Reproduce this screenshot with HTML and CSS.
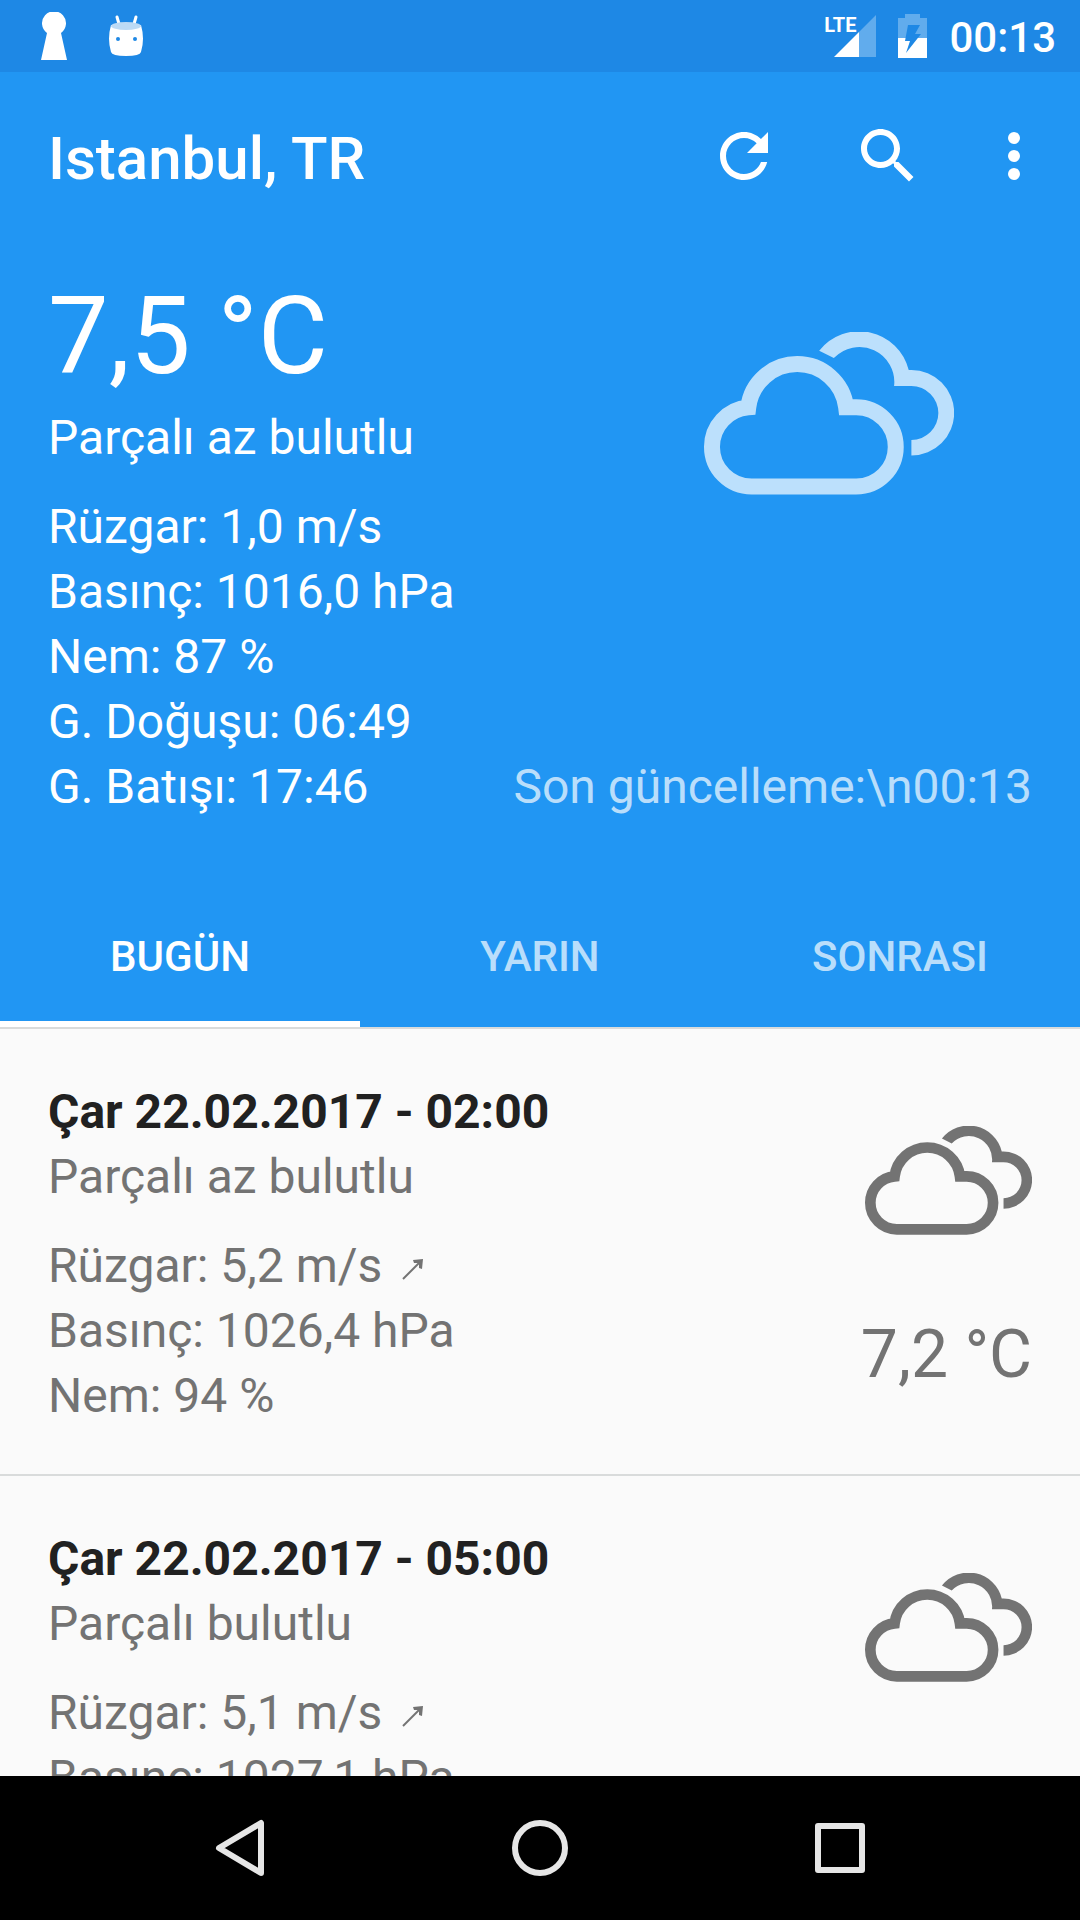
FILE: index.html
```html
<!DOCTYPE html>
<html lang="tr">
<head>
<meta charset="utf-8">
<meta name="viewport" content="width=device-width, initial-scale=1">
<title>Istanbul, TR</title>
<link rel="stylesheet" href="styles.css">
</head>
<body>
<svg class="defs" aria-hidden="true">
  <symbol id="clouds" viewBox="72 96 751 489">
    <path d="M529 560H215A119 119 0 0 1 96 441A119 119 0 0 1 205 322A148 148 0 0 1 352 192A148 148 0 0 1 499 322H529A119 119 0 0 1 648 441A119 119 0 0 1 529 560Z" fill="none" stroke="currentColor" stroke-width="48" stroke-miterlimit="10"/>
    <path d="M418 152A153 153 0 0 1 687 210H695A128 128 0 0 1 695 467V420A81 81 0 0 0 695 258H643A105 105 0 0 0 462 174Z" fill="currentColor"/>
  </symbol>
  <symbol id="wind-arrow" viewBox="0 0 22 22">
    <path d="M1 21L19 3" fill="none" stroke="currentColor" stroke-width="2"/>
    <path d="M21 1L20 11L17 10V5H12L11 2Z" fill="currentColor"/>
  </symbol>
</svg>
<div class="screen">
  <header class="top">
    <div class="status-bar">
      <div class="status-group notifications">
        <svg width="28" height="48" viewBox="0 0 28 48" fill="#fff"><path d="M7 21A12 12 0 1 1 21 21L27 48H1Z"/></svg>
        <svg width="36" height="42" viewBox="0 0 36 42">
          <path d="M9 2L11 9M28 2L26 9" stroke="#fff" stroke-width="3" stroke-linecap="round"/>
          <path d="M3 10H33Q37 24 33 37Q32 41 18 41Q4 41 3 37Q-1 24 3 10Z" fill="#fff"/>
          <ellipse cx="18" cy="11" rx="15" ry="4" fill="#bcdaf5"/>
          <circle cx="10" cy="24" r="2" fill="#1e88e5"/><circle cx="27" cy="24" r="2" fill="#1e88e5"/>
        </svg>
      </div>
      <div class="status-group">
        <div class="signal">
          <span class="network">LTE</span>
          <svg width="42" height="42" viewBox="0 0 42 42" fill="#fff"><path d="M0 42L25 17V42Z"/><path d="M25 17L42 0V42H25Z" opacity=".3"/></svg>
        </div>
        <svg width="29" height="44" viewBox="0 0 29 44" fill="#fff">
          <path d="M7 0H22V4H29V24H0V4H7Z" opacity=".3"/>
          <path d="M0 24H29V44H0Z"/>
          <path d="M10 11H22L17 20H23L8 39L12 27H7Z" fill="#1e88e5"/>
        </svg>
        <time class="clock">00:13</time>
      </div>
    </div>
    <div class="app-bar">
      <h1 class="city">Istanbul, TR</h1>
      <button class="action" aria-label="Yenile"><svg width="72" height="72" viewBox="0 0 24 24" fill="currentColor"><path d="M17.65 6.35C16.2 4.9 14.21 4 12 4c-4.42 0-7.99 3.58-7.99 8s3.57 8 7.99 8c3.73 0 6.84-2.55 7.73-6h-2.08c-.82 2.33-3.04 4-5.65 4-3.31 0-6-2.69-6-6s2.69-6 6-6c1.66 0 3.14.69 4.22 1.78L13 11h7V4l-2.35 2.35z"/></svg></button>
      <button class="action" aria-label="Ara"><svg width="72" height="72" viewBox="0 0 24 24" fill="currentColor"><path d="M15.5 14h-.79l-.28-.27C15.41 12.59 16 11.11 16 9.5 16 5.91 13.09 3 9.5 3S3 5.91 3 9.5 5.91 16 9.5 16c1.61 0 3.09-.59 4.23-1.57l.27.28v.79l5 4.99L20.49 19l-4.99-5zm-6 0C7.01 14 5 11.99 5 9.5S7.01 5 9.5 5 14 7.01 14 9.5 11.99 14 9.5 14z"/></svg></button>
      <button class="action overflow" aria-label="Menü"><svg width="72" height="72" viewBox="0 0 24 24" fill="currentColor"><circle cx="12" cy="6" r="2"/><circle cx="12" cy="12" r="2"/><circle cx="12" cy="18" r="2"/></svg></button>
    </div>
    <section class="current">
      <div>
        <p class="temperature">7,5 °C</p>
        <p>Parçalı az bulutlu</p>
        <div class="details">
          <p>Rüzgar: 1,0 m/s</p>
          <p>Basınç: 1016,0 hPa</p>
          <p>Nem: 87 %</p>
          <p>G. Doğuşu: 06:49</p>
          <p>G. Batışı: 17:46</p>
        </div>
      </div>
      <div class="current-side">
        <svg class="current-icon"><use href="#clouds"/></svg>
        <p>Son güncelleme:\n00:13</p>
      </div>
    </section>
    <nav class="tabs">
      <button class="tab selected">BUGÜN</button>
      <button class="tab">YARIN</button>
      <button class="tab">SONRASI</button>
    </nav>
  </header>
  <main class="forecast">
    <article class="entry">
      <div>
        <h2 class="entry-time">Çar 22.02.2017 - 02:00</h2>
        <p>Parçalı az bulutlu</p>
        <div class="details">
          <p>Rüzgar: 5,2 m/s <svg class="wind"><use href="#wind-arrow"/></svg></p>
          <p>Basınç: 1026,4 hPa</p>
          <p>Nem: 94 %</p>
        </div>
      </div>
      <div class="entry-side">
        <svg class="entry-icon"><use href="#clouds"/></svg>
        <p class="entry-temperature">7,2 °C</p>
      </div>
    </article>
    <article class="entry">
      <div>
        <h2 class="entry-time">Çar 22.02.2017 - 05:00</h2>
        <p>Parçalı bulutlu</p>
        <div class="details">
          <p>Rüzgar: 5,1 m/s <svg class="wind"><use href="#wind-arrow"/></svg></p>
          <p>Basınç: 1027,1 hPa</p>
        </div>
      </div>
      <div class="entry-side">
        <svg class="entry-icon"><use href="#clouds"/></svg>
      </div>
    </article>
  </main>
  <nav class="system-nav">
    <button class="nav-button" aria-label="Geri"><svg width="60" height="60" viewBox="0 0 60 60"><path d="M51 5V55L9 30Z"/></svg></button>
    <button class="nav-button" aria-label="Ana ekran"><svg width="60" height="60" viewBox="0 0 60 60"><circle cx="30" cy="30" r="25"/></svg></button>
    <button class="nav-button" aria-label="Son uygulamalar"><svg width="60" height="60" viewBox="0 0 60 60"><path d="M8 8H52V52H8Z"/></svg></button>
  </nav>
</div>
</body>
</html>
```

FILE: styles.css
```css
* {
  box-sizing: border-box;
  margin: 0;
  padding: 0;
}

body {
  font-family: Roboto, "Noto Sans", sans-serif;
  font-size: 48px;
  line-height: 65px;
  background: #fafafa;
}

button {
  border: 0;
  background: none;
  color: inherit;
  font: inherit;
}

svg {
  display: block;
}

.defs {
  position: absolute;
  width: 0;
  height: 0;
}

.screen {
  display: flex;
  flex-direction: column;
  height: 100vh;
}

.top {
  flex: none;
  background: #2196f3;
  color: #fff;
}

.status-bar {
  display: flex;
  justify-content: space-between;
  height: 72px;
  padding: 0 24px 0 40px;
  background: #1e88e5;
}

.status-group {
  display: flex;
  align-items: center;
  gap: 22px;
}

.notifications {
  gap: 40px;
}

.signal {
  position: relative;
}

.network {
  position: absolute;
  top: 0;
  right: 20px;
  font-size: 20px;
  font-weight: 700;
  line-height: 20px;
}

.clock {
  padding-top: 2px;
  font-size: 42px;
  font-weight: 500;
}

.app-bar {
  display: flex;
  align-items: center;
  height: 168px;
  padding: 0 12px 0 48px;
}

.city {
  flex: 1;
  padding-top: 4px;
  font-size: 60px;
  font-weight: 500;
}

.action {
  display: flex;
  justify-content: center;
  width: 144px;
}

.overflow {
  width: 108px;
}

.current {
  display: flex;
  justify-content: space-between;
  padding: 27px 48px 64px;
}

.temperature {
  font-size: 108px;
  line-height: 138px;
}

.details {
  margin-top: 24px;
}

.current-side {
  display: flex;
  flex-direction: column;
  align-items: flex-end;
  justify-content: space-between;
  padding-top: 65px;
  color: rgba(255, 255, 255, 0.7);
}

.current-icon {
  width: 250px;
  height: 163px;
  margin-right: 78px;
}

.tabs {
  display: flex;
}

.tab {
  position: relative;
  flex: 1;
  height: 144px;
  padding-top: 2px;
  color: rgba(255, 255, 255, 0.7);
  font-size: 42px;
  font-weight: 500;
}

.selected {
  color: #fff;
}

.selected::after {
  content: "";
  position: absolute;
  inset: auto 0 0;
  height: 6px;
  background: #fff;
}

.forecast {
  flex: 1;
  min-height: 0;
  overflow: hidden;
  color: #737373;
}

.entry {
  display: flex;
  justify-content: space-between;
  padding: 50px 48px 46px;
  border-top: 2px solid #d9dbdb;
}

.entry-time {
  color: #212121;
  font-size: 48px;
  font-weight: 700;
}

.wind {
  display: inline-block;
  width: 22px;
  height: 22px;
  margin: 0 0 2px 8px;
}

.entry-side {
  display: flex;
  flex-direction: column;
  align-items: flex-end;
  gap: 81px;
  padding-top: 47px;
}

.entry-icon {
  width: 167px;
  height: 109px;
}

.entry-temperature {
  font-size: 66px;
  line-height: 77px;
}

.system-nav {
  display: flex;
  flex: none;
  justify-content: center;
  height: 144px;
  background: #000;
}

.nav-button {
  display: flex;
  flex: 0 1 300px;
  align-items: center;
  justify-content: center;
  fill: none;
  stroke: #e6e6e6;
  stroke-width: 6px;
  stroke-linejoin: round;
}
```
